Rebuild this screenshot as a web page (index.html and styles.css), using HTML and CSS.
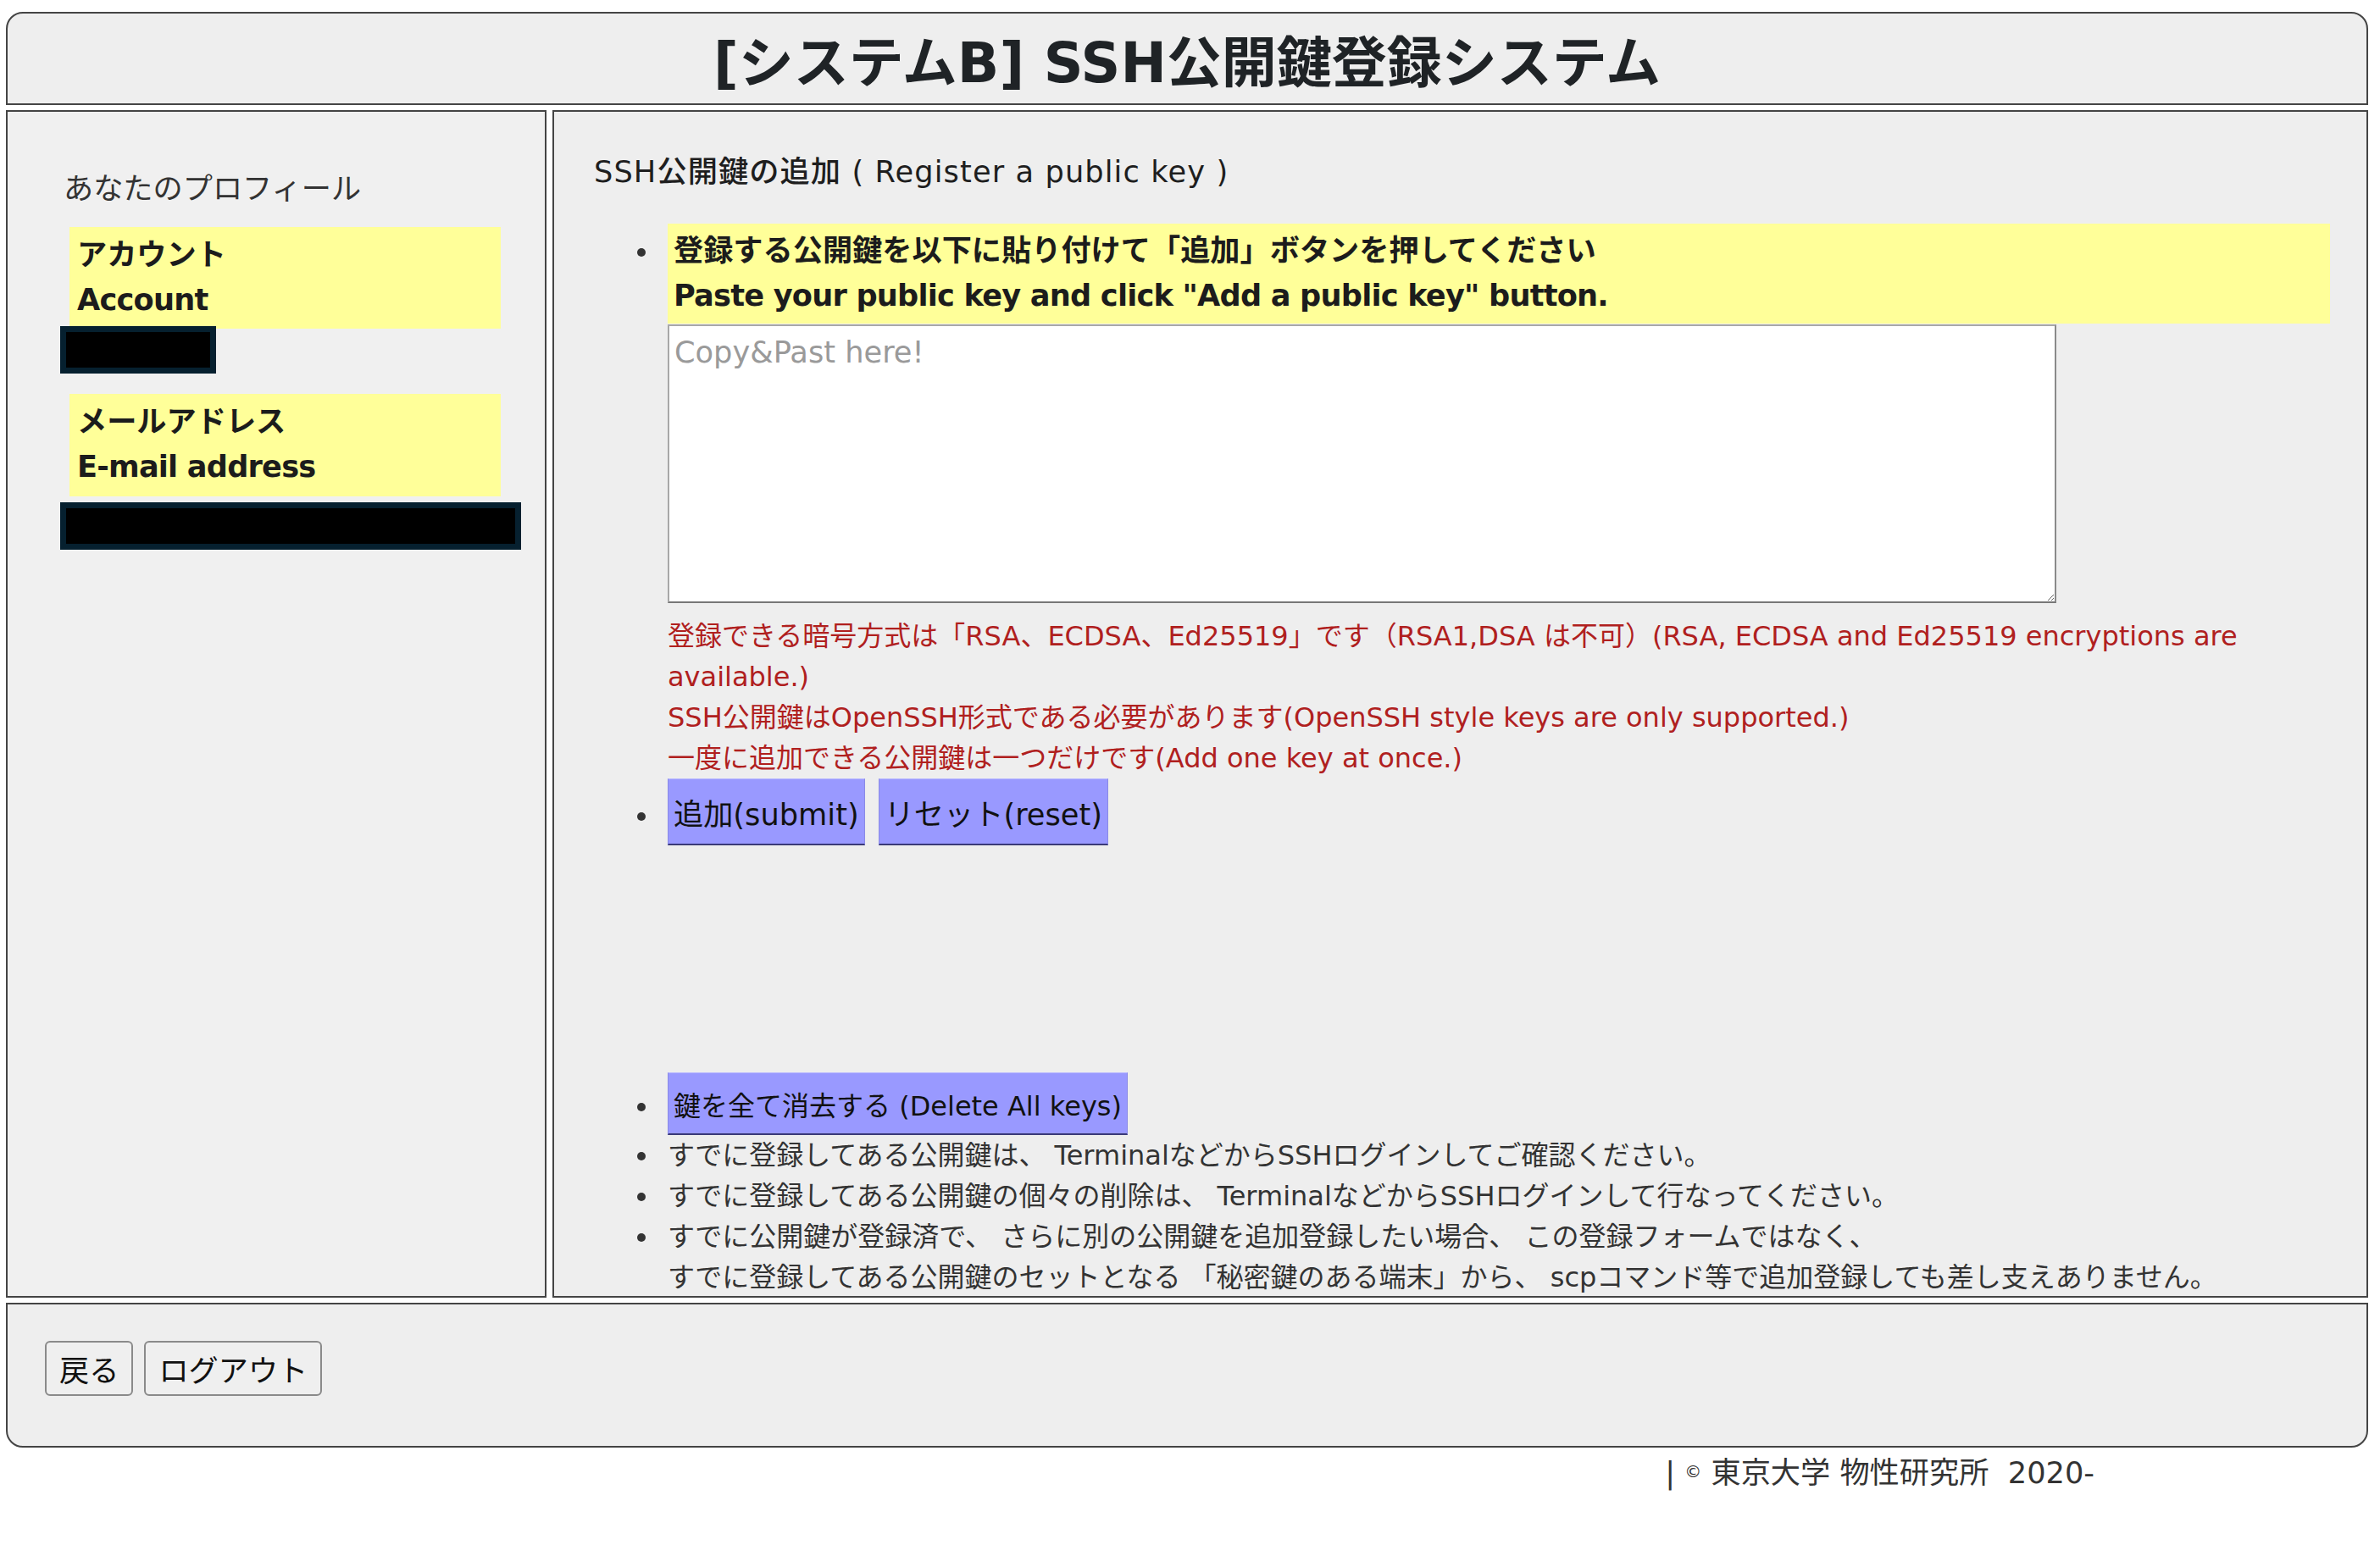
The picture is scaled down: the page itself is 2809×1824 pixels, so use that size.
FILE: index.html
```html
<!DOCTYPE html>
<html lang="ja">
<head>
<meta charset="utf-8">
<title>[システムB] SSH公開鍵登録システム</title>
<link rel="stylesheet" href="styles.css">
</head>
<body>
<div class="page">
  <header class="header">
    <h1 class="title">[システムB] SSH公開鍵登録システム</h1>
  </header>

  <div class="columns">
    <aside class="side">
      <div class="side-title">あなたのプロフィール</div>
      <div class="label label-account">アカウント<br><span class="en">Account</span></div>
      <div class="redact redact-short"></div>
      <div class="label label-mail">メールアドレス<br><span class="en">E-mail address</span></div>
      <div class="redact redact-long"></div>
    </aside>

    <main class="main">
      <h2 class="main-title">SSH公開鍵の追加 ( Register a public key )</h2>
      <ul class="steps">
        <li class="step">
          <div class="note">登録する公開鍵を以下に貼り付けて「追加」ボタンを押してください<br><span class="en">Paste your public key and click "Add a public key" button.</span></div>
          <textarea class="keybox" placeholder="Copy&amp;Past here!"></textarea>
          <div class="warn"><span class="nowrap">登録できる暗号方式は「RSA、ECDSA、Ed25519」です（RSA1,DSA は不可）(RSA, ECDSA and Ed25519 encryptions are</span><br>available.)<br>SSH公開鍵はOpenSSH形式である必要があります(OpenSSH style keys are only supported.)<br>一度に追加できる公開鍵は一つだけです(Add one key at once.)</div>
        </li>
        <li class="step step-buttons"><button class="btn-blue">追加(submit)</button><button class="btn-blue btn-second">リセット(reset)</button></li>
        <li class="step step-delete"><button class="btn-blue btn-delete">鍵を全て消去する (Delete All keys)</button></li>
        <li class="step info">すでに登録してある公開鍵は、 TerminalなどからSSHログインしてご確認ください。</li>
        <li class="step info">すでに登録してある公開鍵の個々の削除は、 TerminalなどからSSHログインして行なってください。</li>
        <li class="step info">すでに公開鍵が登録済で、 さらに別の公開鍵を追加登録したい場合、 この登録フォームではなく、<br>すでに登録してある公開鍵のセットとなる 「秘密鍵のある端末」から、 scpコマンド等で追加登録しても差し支えありません。</li>
      </ul>
    </main>
  </div>

  <footer class="footer">
    <button class="btn-plain">戻る</button>
    <button class="btn-plain">ログアウト</button>
  </footer>

  <div class="copy">| <span class="copy-mark">©</span> 東京大学 物性研究所&nbsp;&nbsp;2020-</div>
</div>
</body>
</html>
```

FILE: styles.css
```css
html, body {
  margin: 0;
  padding: 0;
  background: #ffffff;
}

body {
  font-family: "DejaVu Sans", "Noto Sans CJK JP", sans-serif;
  color: #333333;
}

.page {
  width: 2788px;
  margin: 14px 0 0 7px;
}

/* ---------- header ---------- */
.header {
  box-sizing: border-box;
  height: 110px;
  border: 2px solid #444444;
  border-radius: 20px 20px 0 0;
  background: #eeeeee;
}

.title {
  margin: 0;
  padding-top: 12px;
  font-size: 65px;
  line-height: 94px;
  font-weight: 700;
  text-align: center;
  color: #1f2326;
}

/* ---------- columns ---------- */
.columns {
  display: flex;
  gap: 7px;
  margin-top: 6px;
  height: 1402px;
}

.side {
  box-sizing: border-box;
  width: 638px;
  flex: none;
  border: 2px solid #444444;
  background: #f0f0f0;
  padding-top: 65px;
}

.side-title {
  margin-left: 66px;
  font-size: 35.2px;
  line-height: 52.8px;
  color: #333333;
}

.label {
  box-sizing: border-box;
  width: 509px;
  margin-left: 73px;
  padding: 7px 0 8px 9px;
  background: #ffff99;
  font-size: 35.2px;
  line-height: 52.8px;
  font-weight: 700;
  color: #1c1c1c;
}

.en {
  letter-spacing: -0.8px;
}

.label-account {
  margin-top: 18px;
}

.label-mail {
  margin-top: 24px;
}

.redact {
  box-sizing: border-box;
  height: 56px;
  margin-left: 62px;
  background: #000000;
  border: 7px solid #06202f;
}

.redact-short {
  width: 184px;
  margin-top: -3px;
}

.redact-long {
  width: 544px;
  margin-top: 7px;
}

.main {
  box-sizing: border-box;
  flex: 1;
  border: 2px solid #444444;
  background: #eeeeee;
  overflow: hidden;
  padding: 45px 43px 0 47px;
}

.main-title {
  margin: 0;
  font-size: 35.2px;
  line-height: 52.8px;
  font-weight: 500;
  letter-spacing: 1.1px;
  color: #1e1e1e;
}

.steps {
  margin: 34px 0 0 0;
  padding-left: 78px;
  list-style: disc;
  font-size: 32px;
  line-height: 48px;
}

.step {
  padding-left: 9px;
}

.note {
  box-sizing: border-box;
  padding: 6px 0 7px 7px;
  background: #ffff99;
  font-size: 35.2px;
  line-height: 52.8px;
  font-weight: 700;
  color: #1c1c1c;
}

.keybox {
  display: block;
  box-sizing: border-box;
  width: 1639px;
  height: 329px;
  margin: 1px 0 0 0;
  padding: 10px 6px 5px;
  border: 2px solid #a8a8a8;
  border-bottom-color: #777777;
  border-right-color: #8a8a8a;
  background: #ffffff;
  font-family: "DejaVu Sans", "Noto Sans CJK JP", sans-serif;
  font-size: 35.2px;
  line-height: 42px;
  color: #222222;
  resize: both;
}

.keybox::placeholder {
  color: #9a9a9a;
}

.warn {
  margin-top: 15px;
  color: #b0201e;
}

.nowrap {
  white-space: nowrap;
}

.btn-blue {
  box-sizing: border-box;
  height: 79px;
  margin: 0;
  padding: 0 6px;
  border: 1px solid #8a8ae6;
  border-top-color: #b9b9ff;
  border-bottom: 2px solid #3a3a78;
  background: #9999ff;
  font-family: "DejaVu Sans", "Noto Sans CJK JP", sans-serif;
  font-size: 35.2px;
  color: #111111;
}

.btn-second {
  margin-left: 16px;
}

.step-delete {
  margin-top: 268px;
}

.btn-delete {
  height: 74px;
  font-size: 32px;
}

.info {
  color: #333333;
}

/* ---------- footer ---------- */
.footer {
  box-sizing: border-box;
  display: flex;
  align-items: flex-start;
  gap: 13px;
  height: 171px;
  margin-top: 6px;
  padding: 43px 0 0 44px;
  border: 2px solid #444444;
  border-radius: 0 0 20px 20px;
  background: #eeeeee;
}

.btn-plain {
  box-sizing: border-box;
  height: 65px;
  margin: 0;
  padding: 0 15px;
  border: 2px solid #8a8a8a;
  border-radius: 6px;
  background: #efefef;
  font-family: "DejaVu Sans", "Noto Sans CJK JP", sans-serif;
  font-size: 35.2px;
  color: #111111;
}

.copy {
  margin-top: 2px;
  padding-right: 323px;
  text-align: right;
  font-size: 35.2px;
  line-height: 52.8px;
  color: #333333;
}

.copy-mark {
  font-size: 20px;
  vertical-align: 7px;
}
```
